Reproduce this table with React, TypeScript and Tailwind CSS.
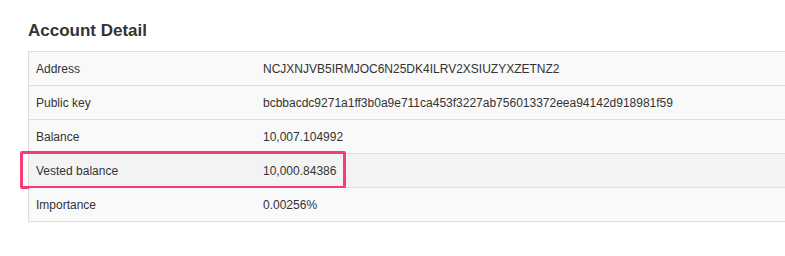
const rows = [
  { label: "Address", value: "NCJXNJVB5IRMJOC6N25DK4ILRV2XSIUZYXZETNZ2" },
  { label: "Public key", value: "bcbbacdc9271a1ff3b0a9e711ca453f3227ab756013372eea94142d918981f59" },
  { label: "Balance", value: "10,007.104992" },
  { label: "Vested balance", value: "10,000.84386", highlight: true },
  { label: "Importance", value: "0.00256%" },
];

export default function App() {
  return (
    <div className="min-h-[256px] bg-white pl-[28px] pt-[21px] font-['Liberation_Sans',Arial,sans-serif] text-[#333]">
      <h2 className="mb-[10px] text-[17px] leading-[20px] font-bold">Account Detail</h2>
      <div className="border-l border-t border-[#ddd]">
        {rows.map((row) => (
          <div
            key={row.label}
            className={`relative grid h-[34px] grid-cols-[234px_1fr] items-center border-b border-[#ddd] text-[12px] ${
              row.highlight ? "bg-[#f3f3f3]" : "bg-[#f9f9f9]"
            }`}
          >
            <div className="px-[7px]">{row.label}</div>
            <div className="whitespace-nowrap">{row.value}</div>
            {row.highlight && (
              <div className="pointer-events-none absolute -top-[3px] -left-[9px] h-[38px] w-[326px] rounded-[2px] border-[3px] border-[#fb3a72]" />
            )}
          </div>
        ))}
      </div>
    </div>
  );
}
